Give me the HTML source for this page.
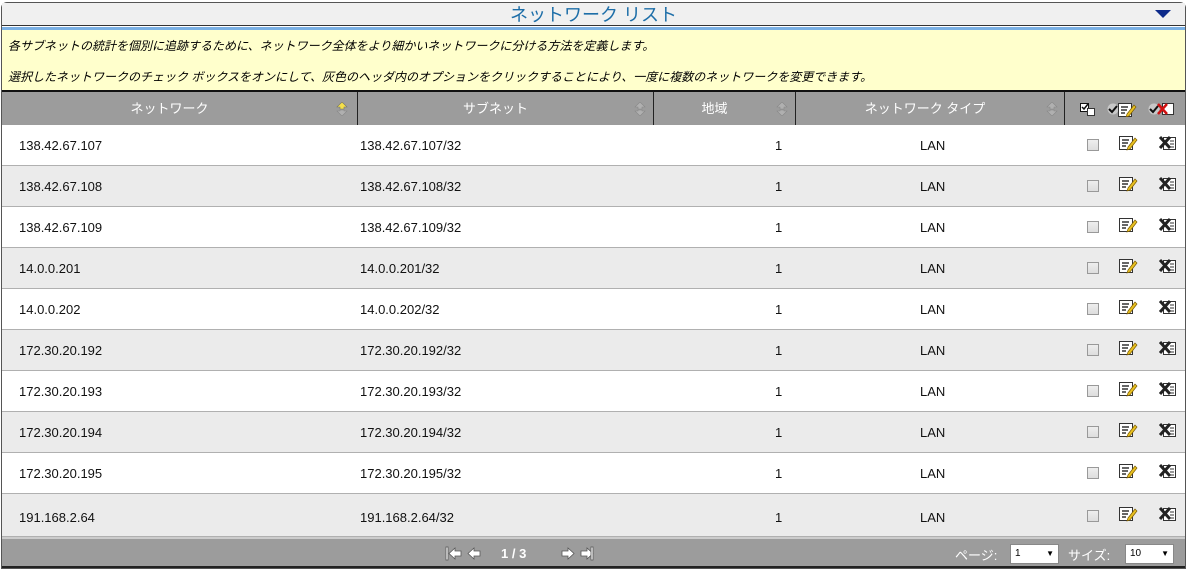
<!DOCTYPE html>
<html><head><meta charset="utf-8"><style>
*{margin:0;padding:0;box-sizing:border-box}
body{width:1186px;height:569px;background:#fff;position:relative;overflow:hidden;font-family:"Liberation Sans","Noto Sans CJK JP",sans-serif}
.a{position:absolute}
.frame{left:1px;top:2px;width:1185px;height:567px;border:1px solid #555;border-radius:6px 6px 0 0}
.title{left:2px;top:3px;width:1183px;height:23px;background:#f0f0f0;border-bottom:1px solid #333;color:#1d6ea8;font-size:18px;text-align:center;line-height:24px}
.blue{left:2px;top:27px;width:1183px;height:3px;background:#7ab0e4}
.info{left:2px;top:30px;width:1183px;height:60px;background:#ffffcc;font-size:12px;font-style:italic;color:#000}
.hdr{left:2px;top:90px;width:1183px;height:35px;background:#9c9c9c;border-top:2px solid #111}
.hc{position:absolute;top:0;height:33px;line-height:33px;color:#fff;font-size:13px;text-align:center;border-right:1px solid #222}
.row{position:absolute;left:2px;width:1183px;height:41px;border-bottom:1px solid #b0b0b0;font-size:13px;color:#111}
.row span{position:absolute;top:13px}
.cb{position:absolute;left:1085px;top:14px;width:12px;height:12px;border:1px solid #999;background:linear-gradient(#eee,#ddd)}
.ed{position:absolute;left:1117px;top:10px}
.dl{position:absolute;left:1157px;top:10px}
.ft{left:2px;top:537px;width:1183px;height:31px;background:#9c9c9c;border-top:2px solid #ccc;border-bottom:2px solid #222;color:#fff;font-size:13px}
.sel{position:absolute;top:5px;height:20px;background:#fff;border:1px solid #888;color:#000;font-size:10px;padding:3px 4px}
.sel:after{content:"▼";position:absolute;right:4px;top:4px;font-size:8px}
.srt{position:absolute;top:10px}
</style></head><body>
<svg width="0" height="0" style="position:absolute"><defs>
<g id="ed"><rect x="0.5" y="1.5" width="13" height="13" fill="#fff" stroke="#333"/><path d="M3 5h7M3 8h6M3 11h4" stroke="#333" stroke-width="1.5"/><path d="M9 12l7-9 2 2-7 9-3 1z" fill="#e8c020" stroke="#7a5a00" stroke-width="0.7"/></g>
<g id="dl"><rect x="4.5" y="2.5" width="12" height="12" fill="#fff" stroke="#333"/><path d="M11 6h4M11 9h4M11 12h4" stroke="#333"/><path d="M1 2l10 11M11 2L1 13" stroke="#222" stroke-width="3"/></g>
<g id="sr"><path d="M6 0L11 5H8V7H4V5H1Z M6 14L11 9H8V8H4V9H1Z" fill="#b0b0b0" stroke="#888" stroke-width="0.6"/></g>
</defs></svg>
<div class="a frame"></div>
<div class="a title">ネットワーク リスト</div>
<svg class="a" style="left:1155px;top:10px" width="16" height="9"><polygon points="0,0 16,0 8,8" fill="#0d2a8a"/></svg>
<div class="a blue"></div>
<div class="a info"><div style="position:absolute;left:6px;top:7px">各サブネットの統計を個別に追跡するために、ネットワーク全体をより細かいネットワークに分ける方法を定義します。</div><div style="position:absolute;left:6px;top:38px">選択したネットワークのチェック ボックスをオンにして、灰色のヘッダ内のオプションをクリックすることにより、一度に複数のネットワークを変更できます。</div></div>
<div class="a hdr">
<div class="hc" style="left:0;width:356px;padding-right:20px">ネットワーク<svg class="srt" style="left:334px" width="12" height="14"><path d="M6 0L11 5H8V7H4V5H1Z" fill="#f5e04a" stroke="#776" stroke-width="0.6"/><path d="M6 14L11 9H8V8H4V9H1Z" fill="#b0b0b0" stroke="#888" stroke-width="0.6"/></svg></div>
<div class="hc" style="left:356px;width:296px;padding-right:20px">サブネット<svg class="srt" style="left:276px" width="12" height="14"><use href="#sr"/></svg></div>
<div class="hc" style="left:652px;width:142px;padding-right:20px">地域<svg class="srt" style="left:122px" width="12" height="14"><use href="#sr"/></svg></div>
<div class="hc" style="left:794px;width:269px;padding-right:10px">ネットワーク タイプ<svg class="srt" style="left:250px" width="12" height="14"><use href="#sr"/></svg></div>
<svg class="a" style="left:1076px;top:9px" width="105" height="16">
<rect x="2.5" y="2.5" width="8" height="8" fill="#fff" stroke="#111"/><path d="M4 6l2 2 4-5" stroke="#111" fill="none" stroke-width="1.5"/><rect x="9.5" y="7.5" width="7" height="7" fill="#fff" stroke="#333"/>
<circle cx="35" cy="8" r="5.5" fill="#c8c8c8"/><path d="M31 8l3 3 5-6" stroke="#111" fill="none" stroke-width="2"/><g transform="translate(40,1)"><use href="#ed"/></g>
<circle cx="76" cy="8" r="5.5" fill="#c8c8c8"/><path d="M72 8l3 3 5-6" stroke="#111" fill="none" stroke-width="2"/><rect x="84.5" y="2.5" width="11" height="11" fill="#fff" stroke="#333"/><path d="M80 3l9 10M89 3l-9 10" stroke="#d01010" stroke-width="2.5"/>
</svg>
</div>
<div class="row" style="top:125px"><span style="left:17px">138.42.67.107</span><span style="left:358px">138.42.67.107/32</span><span style="left:773px">1</span><span style="left:918px">LAN</span><div class="cb"></div><svg class="ed" width="20" height="16"><use href="#ed"/></svg><svg class="dl" width="20" height="16"><use href="#dl"/></svg></div>
<div class="row" style="top:166px;background:#ebebeb"><span style="left:17px">138.42.67.108</span><span style="left:358px">138.42.67.108/32</span><span style="left:773px">1</span><span style="left:918px">LAN</span><div class="cb"></div><svg class="ed" width="20" height="16"><use href="#ed"/></svg><svg class="dl" width="20" height="16"><use href="#dl"/></svg></div>
<div class="row" style="top:207px"><span style="left:17px">138.42.67.109</span><span style="left:358px">138.42.67.109/32</span><span style="left:773px">1</span><span style="left:918px">LAN</span><div class="cb"></div><svg class="ed" width="20" height="16"><use href="#ed"/></svg><svg class="dl" width="20" height="16"><use href="#dl"/></svg></div>
<div class="row" style="top:248px;background:#ebebeb"><span style="left:17px">14.0.0.201</span><span style="left:358px">14.0.0.201/32</span><span style="left:773px">1</span><span style="left:918px">LAN</span><div class="cb"></div><svg class="ed" width="20" height="16"><use href="#ed"/></svg><svg class="dl" width="20" height="16"><use href="#dl"/></svg></div>
<div class="row" style="top:289px"><span style="left:17px">14.0.0.202</span><span style="left:358px">14.0.0.202/32</span><span style="left:773px">1</span><span style="left:918px">LAN</span><div class="cb"></div><svg class="ed" width="20" height="16"><use href="#ed"/></svg><svg class="dl" width="20" height="16"><use href="#dl"/></svg></div>
<div class="row" style="top:330px;background:#ebebeb"><span style="left:17px">172.30.20.192</span><span style="left:358px">172.30.20.192/32</span><span style="left:773px">1</span><span style="left:918px">LAN</span><div class="cb"></div><svg class="ed" width="20" height="16"><use href="#ed"/></svg><svg class="dl" width="20" height="16"><use href="#dl"/></svg></div>
<div class="row" style="top:371px"><span style="left:17px">172.30.20.193</span><span style="left:358px">172.30.20.193/32</span><span style="left:773px">1</span><span style="left:918px">LAN</span><div class="cb"></div><svg class="ed" width="20" height="16"><use href="#ed"/></svg><svg class="dl" width="20" height="16"><use href="#dl"/></svg></div>
<div class="row" style="top:412px;background:#ebebeb"><span style="left:17px">172.30.20.194</span><span style="left:358px">172.30.20.194/32</span><span style="left:773px">1</span><span style="left:918px">LAN</span><div class="cb"></div><svg class="ed" width="20" height="16"><use href="#ed"/></svg><svg class="dl" width="20" height="16"><use href="#dl"/></svg></div>
<div class="row" style="top:453px"><span style="left:17px">172.30.20.195</span><span style="left:358px">172.30.20.195/32</span><span style="left:773px">1</span><span style="left:918px">LAN</span><div class="cb"></div><svg class="ed" width="20" height="16"><use href="#ed"/></svg><svg class="dl" width="20" height="16"><use href="#dl"/></svg></div>
<div class="row" style="top:494px;background:#ebebeb;height:43px"><span style="left:17px;top:16px">191.168.2.64</span><span style="left:358px;top:16px">191.168.2.64/32</span><span style="left:773px;top:16px">1</span><span style="left:918px;top:16px">LAN</span><div class="cb" style="top:16px"></div><svg class="ed" style="top:12px" width="20" height="16"><use href="#ed"/></svg><svg class="dl" style="top:12px" width="20" height="16"><use href="#dl"/></svg></div>
<div class="a ft">
<svg class="a" style="left:443px;top:7px" width="150" height="16">
<g fill="#fff" stroke="#555" stroke-width="0.8"><rect x="1" y="1" width="2" height="13"/><path d="M4 7.5L10 2V5H16V10H10V13Z"/><path d="M23 7.5L29 2V5H35V10H29V13Z"/><path d="M117 5H123V2L129 7.5 123 13V10H117Z"/><path d="M136 5H142V2L148 7.5 142 13V10H136Z"/></g>
<rect x="146" y="1" width="2" height="13" fill="#fff" stroke="#555" stroke-width="0.8"/>
</svg>
<div style="position:absolute;left:499px;top:7px;font-weight:bold;font-size:13px">1 / 3</div>
<div style="position:absolute;left:953px;top:6px">ページ:</div>
<div class="sel" style="left:1008px;width:49px">1</div>
<div style="position:absolute;left:1066px;top:6px">サイズ:</div>
<div class="sel" style="left:1123px;width:49px">10</div>
</div>
</body></html>
